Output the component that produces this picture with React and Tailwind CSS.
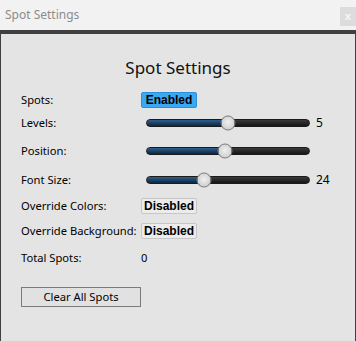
import { useState } from 'react';

const Slider = ({ value, label }) => (
  <div className="flex items-center">
    <div className="relative ml-[5px] w-[164px] h-[8px] rounded-full bg-gradient-to-b from-[#3a3a3a] to-[#161616] border border-[#1a1a1a]">
      <div
        className="h-full rounded-full bg-gradient-to-b from-[#2f5f8f] to-[#0c2640]"
        style={{ width: `${value}%` }}
      ></div>
      <div
        className="absolute top-1/2 w-[15px] h-[15px] -translate-x-1/2 -translate-y-1/2 rounded-full border border-[#7a7a7a] bg-[radial-gradient(circle_at_50%_45%,#f0f0f0,#c4c4c4)]"
        style={{ left: `${value}%` }}
      ></div>
    </div>
    {label && <span className="ml-[6px] text-[12px] text-black">{label}</span>}
  </div>
);

const ToggleButton = ({ on }) => (
  <button
    className={
      on
        ? "w-[56px] h-[16px] flex items-center justify-center rounded-[2px] border border-[#2e8fd6] bg-[#3aa8f2] text-[12px] font-bold text-black font-['Liberation_Sans',sans-serif] leading-none"
        : "w-[56px] h-[16px] flex items-center justify-center rounded-[2px] border border-[#c6c6c6] bg-[#ececec] text-[12px] font-bold text-black font-['Liberation_Sans',sans-serif] leading-none"
    }
  >
    {on ? 'Enabled' : 'Disabled'}
  </button>
);

const App = () => {
  const [spots] = useState(true);

  return (
    <div className="w-[356px] h-[341px] flex flex-col overflow-hidden font-['Noto_Sans',sans-serif]">
      {/* title bar */}
      <div className="h-[30px] shrink-0 bg-[#f2f2f2] flex justify-between">
        <span className="pl-[5px] mt-[6px] text-[12px] leading-[18px] text-[#8c8c8c]">Spot Settings</span>
        <div className="mt-[7px] w-[16px] h-[19px] bg-[#dcdcdc] flex items-center justify-center text-[11px] text-[#f4f4f4] font-bold">
          x
        </div>
      </div>
      <div className="h-[4px] shrink-0 bg-[#404040]"></div>

      {/* panel */}
      <div className="flex-1 bg-[#e4e4e4] border-x border-[#404040] pl-[20px] text-[11.2px] text-black whitespace-nowrap">
        <div className="mt-[22px] h-[24px] leading-[24px] text-[17px] text-center pr-[20px] text-[#111]">Spot Settings</div>
        <div className="mt-[10px] grid grid-cols-[120px_1fr]">
          <div className="h-[20px] flex items-center">Spots:</div>
          <div className="h-[20px] flex items-center"><ToggleButton on={spots} /></div>

          <div className="h-[26px] flex items-center">Levels:</div>
          <div className="h-[26px] flex items-center"><Slider value={50} label="5" /></div>

          <div className="h-[30px] flex items-center">Position:</div>
          <div className="h-[30px] flex items-center"><Slider value={48} /></div>

          <div className="h-[28px] flex items-center">Font Size:</div>
          <div className="h-[28px] flex items-center"><Slider value={35} label="24" /></div>

          <div className="h-[24px] flex items-center">Override Colors:</div>
          <div className="h-[24px] flex items-center"><ToggleButton on={false} /></div>

          <div className="h-[26px] flex items-center">Override Background:</div>
          <div className="h-[26px] flex items-center"><ToggleButton on={false} /></div>

          <div className="h-[28px] flex items-center">Total Spots:</div>
          <div className="h-[28px] flex items-center">0</div>
        </div>
        <button className="mt-[15px] w-[120px] h-[20px] flex items-center justify-center border border-[#7a7a7a] bg-[#e1e1e1] text-[11.2px]">
          Clear All Spots
        </button>
      </div>
    </div>
  );
};

export default App;
